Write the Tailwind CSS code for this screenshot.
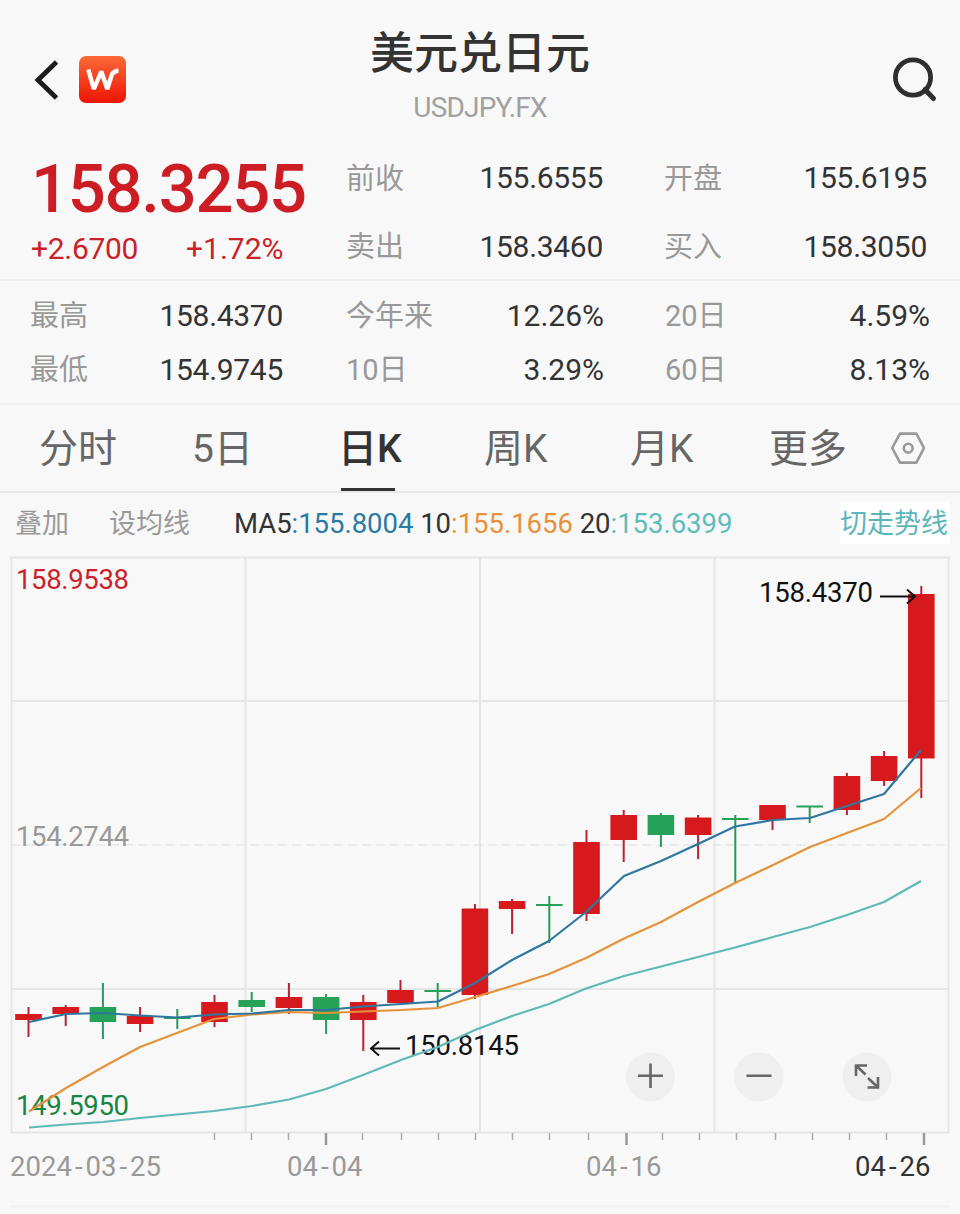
<!DOCTYPE html>
<html lang="zh-CN">
<head>
  <meta charset="UTF-8">
  <meta name="viewport" content="width=device-width, initial-scale=1.0">
  <title>美元兑日元 USDJPY.FX</title>
  <script src="https://cdn.jsdelivr.net/npm/@tailwindcss/browser@4"></script>
</head>
<body class="bg-[#f8f8f8] text-[#333] font-[Roboto,'Noto_Sans_CJK_SC',sans-serif]">
  <div class="w-[960px] h-[1214px] overflow-hidden flex flex-col">

    <!-- Header -->
    <header class="h-[144px] flex justify-between shrink-0">
      <div class="w-[200px] pl-[34px] pt-[56px] flex items-start">
        <svg class="w-[26px] h-[48px]" viewBox="0 0 26 48" fill="none" stroke="#1c1c1c" stroke-width="4.8">
          <path d="M22.500 6 4 24l18.500 18" />
        </svg>
        <svg class="ml-[19px] w-[47px] h-[47px]" viewBox="0 0 47 47">
          <defs>
            <linearGradient id="logo" x1="0" y1="0" x2="0" y2="1">
              <stop offset="0" stop-color="#fb6a37" />
              <stop offset="1" stop-color="#ee1405" />
            </linearGradient>
          </defs>
          <rect width="47" height="47" rx="7" fill="url(#logo)" />
          <path d="M9.300 13.500 14.800 33 22.300 15.500 28.300 33 32.500 19.500Q34.200 15 39.500 14.800" fill="none" stroke="#fff" stroke-width="4.400" stroke-linejoin="bevel" />
        </svg>
      </div>
      <div class="flex flex-col items-center">
        <h1 class="mt-[22px] text-[44px] leading-[64px] font-medium">美元兑日元</h1>
        <p class="text-[28px] leading-[44px] text-[#a0a0a0] tracking-[-0.8px]">USDJPY.FX</p>
      </div>
      <div class="w-[200px] flex justify-end pr-[21px] pt-[56px]">
        <svg class="w-[48px] h-[48px]" viewBox="0 0 48 48" fill="none" stroke="#2e2e2e" stroke-width="4.800">
          <circle cx="22" cy="21.500" r="17.600" />
          <path d="M34 33.500 42.500 42.500" stroke-width="5" stroke-linecap="round" />
        </svg>
      </div>
    </header>

    <!-- Last price and quotes -->
    <section class="h-[137px] shrink-0 flex border-b-2 border-[#efefef] text-[30px] tracking-[-0.3px]">
      <div class="w-[346px] pl-[31px] text-[#c8222a]">
        <div class="h-[84px] pt-[2px] text-[67px] leading-[86px] font-medium tracking-[-1.3px] text-[#cc1d24]">158.3255</div>
        <div class="flex leading-[42px]">
          <span class="w-[155px]">+2.6700</span>
          <span class="tracking-normal">+1.72%</span>
        </div>
      </div>
      <div class="w-[257px] leading-[68px]">
        <div class="flex justify-between h-[69px]"><span class="pt-px text-[29px] text-[#999] tracking-normal">前收</span><span>155.6555</span></div>
        <div class="flex justify-between"><span class="text-[29px] text-[#999] tracking-normal">卖出</span><span>158.3460</span></div>
      </div>
      <div class="ml-[61px] w-[263px] leading-[68px]">
        <div class="flex justify-between h-[69px]"><span class="pt-px text-[29px] text-[#999] tracking-normal">开盘</span><span>155.6195</span></div>
        <div class="flex justify-between"><span class="text-[29px] text-[#999] tracking-normal">买入</span><span>158.3050</span></div>
      </div>
    </section>

    <!-- Range and performance -->
    <section class="h-[124px] shrink-0 flex border-b-2 border-[#efefef] pt-[8px] text-[30px] leading-[54px]">
      <div class="ml-[30px] w-[253px]">
        <div class="flex justify-between h-[54px]"><span class="text-[29px] text-[#999]">最高</span><span class="tracking-[-0.3px]">158.4370</span></div>
        <div class="flex justify-between h-[54px]"><span class="text-[29px] text-[#999]">最低</span><span class="tracking-[-0.3px]">154.9745</span></div>
      </div>
      <div class="ml-[63px] w-[258px]">
        <div class="flex justify-between h-[54px]"><span class="text-[29px] text-[#999]">今年来</span><span>12.26%</span></div>
        <div class="flex justify-between h-[54px]"><span class="text-[29px] text-[#999]">10日</span><span>3.29%</span></div>
      </div>
      <div class="ml-[61px] w-[265px]">
        <div class="flex justify-between h-[54px]"><span class="text-[29px] text-[#999]">20日</span><span>4.59%</span></div>
        <div class="flex justify-between h-[54px]"><span class="text-[29px] text-[#999]">60日</span><span>8.13%</span></div>
      </div>
    </section>

    <!-- Period tabs -->
    <nav class="h-[88px] shrink-0 flex border-b-2 border-[#e8e8e8] text-[39px] leading-[88px] text-[#666]">
      <span class="ml-[39px] w-[153px]">分时</span>
      <span class="w-[146px]">5日</span>
      <span class="w-[146px] flex flex-col text-[#333] font-medium">
        <span class="h-[83px]">日K</span>
        <span class="ml-[3px] w-[54px] h-[3px] bg-[#333]"></span>
      </span>
      <span class="w-[146px]">周K</span>
      <span class="w-[139px]">月K</span>
      <span class="w-[121px]">更多</span>
      <svg class="mt-[26px] w-[36px] h-[34px]" viewBox="0 0 36 34" fill="none" stroke="#999" stroke-width="2.600" stroke-linejoin="round">
        <path d="M10 2.600h16.400L34 17l-7.600 14.600H10L2.200 17z" />
        <circle cx="18.200" cy="17.200" r="4.400" />
      </svg>
    </nav>

    <!-- Moving averages -->
    <div class="h-[62px] shrink-0 flex items-start text-[27px] leading-[62px] text-[#999]">
      <span class="ml-[15px] w-[94px]">叠加</span>
      <span class="w-[125px]">设均线</span>
      <span class="w-[606px] text-[#333] text-[27.5px] tracking-[-0.03px] whitespace-pre">MA5<span class="text-[#2a7aa2]">:155.8004</span> 10<span class="text-[#e8913a]">:155.1656</span> 20<span class="text-[#5fbcbd]">:153.6399</span></span>
      <span class="mt-[9px] h-[42px] w-[110px] bg-white leading-[44px] text-[#5cb5ba]">切走势线</span>
    </div>

    <!-- Candlestick chart -->
    <svg class="block shrink-0 w-[960px] h-[659px]" viewBox="0 555 960 659">
      <g fill="none" stroke="#e6e6e6" stroke-width="2">
        <rect x="11.500" y="557.500" width="937" height="575" />
        <path d="M245.500 558v574M480 558v574M714.500 558v574M12 701h937M12 989h937" />
        <path d="M12 845h937" stroke-width="1.500" stroke-dasharray="9 5" />
        <path d="M11 1206.500h938" stroke="#efefef" />
      </g>
      <g stroke="#aaa" stroke-width="1.500">
        <path d="M214.500 1133v7M251.500 1133v7M288.500 1133v7M362.500 1133v7M401.500 1133v7M438.500 1133v7M475.500 1133v7M512.500 1133v7M549.500 1133v7M588.500 1133v7M662.500 1133v7M699.500 1133v7M736.500 1133v7M775.500 1133v7M812.500 1133v7M849.500 1133v7M886.500 1133v7" />
        <path d="M326 1133v12M626.500 1133v12M924 1133v12" stroke="#999" stroke-width="2.500" />
      </g>

      <g id="candles"></g>

      <g font-size="27.500">
        <text x="16" y="589" fill="#cc1f2b" textLength="113">158.9538</text>
        <text x="16" y="846" fill="#999" textLength="113">154.2744</text>
        <text x="16" y="1115" fill="#178543" textLength="113">149.5950</text>
        <text x="759" y="602" fill="#111" textLength="114">158.4370</text>
        <text x="405" y="1055" fill="#111" textLength="114">150.8145</text>
      </g>
      <g font-size="27.500" fill="#999">
        <text x="10" y="1176" dx="0 0 0 0 3 3 0 3 3">2024-03-25</text>
        <text x="287" y="1176" dx="0 0 3 3">04-04</text>
        <text x="586" y="1176" dx="0 0 3 3">04-16</text>
        <text x="855" y="1176" dx="0 0 3 3" fill="#333">04-26</text>
      </g>
      <g fill="none" stroke="#111" stroke-width="2">
        <path d="M880 596.500h35M907 589.500l8 7-8 7" />
        <path d="M400 1048.500h-29M379 1041.500l-8 7 8 7" />
      </g>

      <g fill="none" stroke-width="2.200" stroke-linejoin="round">
        <polyline stroke="#5fb9b7" points="29,1127.500 66,1124.500 103,1122 140,1118 177,1114.500 214,1111 252,1106 289,1099.500 326,1089 363,1075 401,1060 438,1047 475,1030 512,1016 549,1004 586,988.500 624,976 661,966.500 698,957 735,947.500 773,937 810,927 847,915 884,902 921,881" />
        <polyline stroke="#e6923a" points="29,1111.500 66,1088 103,1067 140,1047 177,1033 214,1019 252,1014.500 289,1012 326,1013 363,1011.500 401,1010 438,1008 475,997 512,986 549,974 586,958 624,938.500 661,922 698,902 735,883 773,865 810,847 847,833 884,819 921,788" />
        <polyline stroke="#2f769f" points="29,1022 66,1014 103,1013 140,1015.500 177,1017.500 214,1014.500 252,1013.500 289,1010 326,1010 363,1006.500 401,1004 438,1001.500 475,983 512,960 549,941 586,912 624,876 661,861 698,844 735,826.500 773,820 810,818 847,806 884,794 921,750" />
      </g>

      <!-- Zoom controls -->
      <g fill="#efefef">
        <circle cx="650.500" cy="1077" r="24.500" />
        <circle cx="758.800" cy="1077" r="24.500" />
        <circle cx="867" cy="1077" r="24.500" />
      </g>
      <g fill="none" stroke="#666" stroke-width="2.600">
        <path d="M638 1075.800h25M650.500 1063.500v24.500M746.500 1075.800h25" />
        <path d="M865.500 1074.500 856 1065.500M867 1065.500h-11v10.500M868 1078l10 9.500M867.500 1087.500H878V1077" />
      </g>
    </svg>
  </div>

  <script>
    // open/close band and high/low of each day: [bodyTop, bodyBottom, wickTop, wickBottom, up]
    const days = [
      [1014, 1020, 1007, 1037, 1],
      [1007, 1014, 1005, 1026, 1],
      [1007, 1022, 983, 1039, 0],
      [1016, 1024, 1007, 1032, 1],
      [1017, 1019, 1009, 1029, 0],
      [1002, 1022, 995, 1027, 1],
      [1000, 1007, 992, 1012, 0],
      [997, 1008, 983, 1014, 1],
      [997, 1020, 994, 1034, 0],
      [1002, 1020, 995, 1051, 1],
      [990, 1003, 980, 1004, 1],
      [990, 992, 983, 1007, 0],
      [908.5, 995, 904, 999, 1],
      [901, 909, 899, 934, 1],
      [904, 906, 896, 943, 0],
      [842, 914, 830, 921, 1],
      [815, 840, 810, 862, 1],
      [815, 835, 813, 847, 0],
      [817.5, 835, 815, 859, 1],
      [818, 820, 815, 882, 0],
      [805, 820, 805, 830, 1],
      [805.5, 807.5, 806, 823, 0],
      [776, 810, 773, 815, 1],
      [756, 781, 751, 786, 1],
      [594, 758.5, 586, 798, 1],
    ];
    document.getElementById('candles').innerHTML = days.map(([top, bottom, high, low, up], i) => {
      const x = 28.5 + i * 37.2;
      const body = up ? '#d5191c' : '#26a158';
      const wick = up ? '#b92233' : '#2a9858';
      return `<rect x="${x - 1}" y="${high}" width="2" height="${low - high}" fill="${wick}" />
        <rect x="${x - 13.3}" y="${top}" width="26.6" height="${bottom - top}" fill="${body}" />`;
    }).join('');
  </script>
</body>
</html>
